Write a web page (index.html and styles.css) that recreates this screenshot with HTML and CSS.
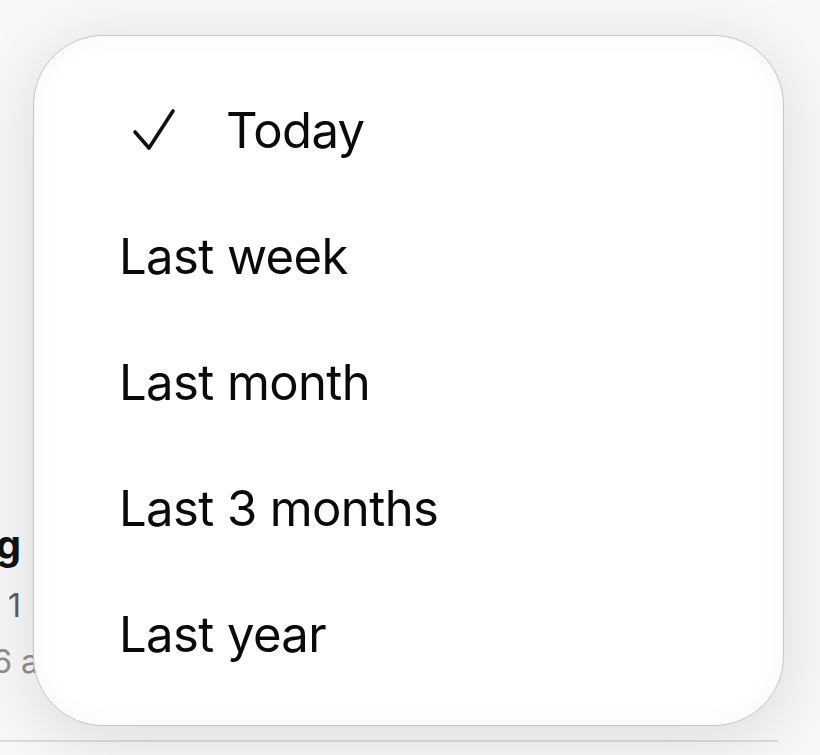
FILE: index.html
```html
<!DOCTYPE html>
<html>
<head>
    <title>Activity</title>
    <meta name="viewport" content="width=device-width, initial-scale=1">
    <link rel="stylesheet" href="styles.css">
</head>
<body>
    <div class="screen">
        <div class="list">
            <div class="row">
                <div class="row-text">
                    <span class="row-title">Running</span>
                    <span class="row-sub">Sep 1</span>
                    <span class="row-time">at 6 am</span>
                </div>
            </div>
            <div class="divider"></div>
        </div>

        <!-- period picker -->
        <div class="menu">
            <div class="menu-item selected">
                <svg class="check" width="48" height="48" viewBox="0 0 48 48">
                    <path d="M6 26 L20 42 L44 5" fill="none" stroke="#111" stroke-width="3.6" stroke-linecap="round" stroke-linejoin="round"/>
                </svg>
                <span>Today</span>
            </div>
            <div class="menu-item"><span>Last week</span></div>
            <div class="menu-item"><span>Last month</span></div>
            <div class="menu-item"><span>Last 3 months</span></div>
            <div class="menu-item"><span>Last year</span></div>
        </div>
    </div>
</body>
</html>
```

FILE: styles.css
```css
body {
    margin: 0;
    background-color: #fff;
    font-family: Inter, "Liberation Sans", sans-serif;
    color: #0a0a0a;
}
.screen {
    position: relative;
    width: 820px;
    height: 755px;
    overflow: hidden;
    background: #f8f8f8;
}
.list {
    padding-top: 518px;
}
.row {
    height: 222px;
}
.row-text {
    width: 21px;
    display: flex;
    flex-direction: column;
    align-items: flex-end;
    white-space: nowrap;
}
.row-title {
    font-size: 40px;
    font-weight: 700;
    line-height: 54px;
    color: #111;
}
.row-sub {
    font-size: 32px;
    line-height: 56px;
    margin-top: 6px;
    color: #5c5c5c;
}
.row-time {
    font-size: 32px;
    line-height: 56px;
    color: #8e8e8e;
    margin-right: -46px;
}
.divider {
    width: 778px;
    height: 2px;
    background: #dcdcdc;
}
.menu {
    position: absolute;
    left: 33px;
    top: 35px;
    width: 751px;
    height: 691px;
    box-sizing: border-box;
    padding: 31px 0 30px;
    background: #fff;
    border: 1px solid #c4c4c4;
    border-radius: 70px;
    box-shadow: 0 12px 70px rgba(0, 0, 0, 0.12), inset 0 0 28px rgba(0, 0, 0, 0.035);
}
.menu-item {
    height: 126px;
    display: flex;
    align-items: center;
    padding-left: 85px;
    font-size: 49px;
    letter-spacing: -0.6px;
}
.menu-item.selected {
    padding-left: 95px;
}
.check {
    width: 48px;
    height: 48px;
    margin-right: 49px;
}
```
